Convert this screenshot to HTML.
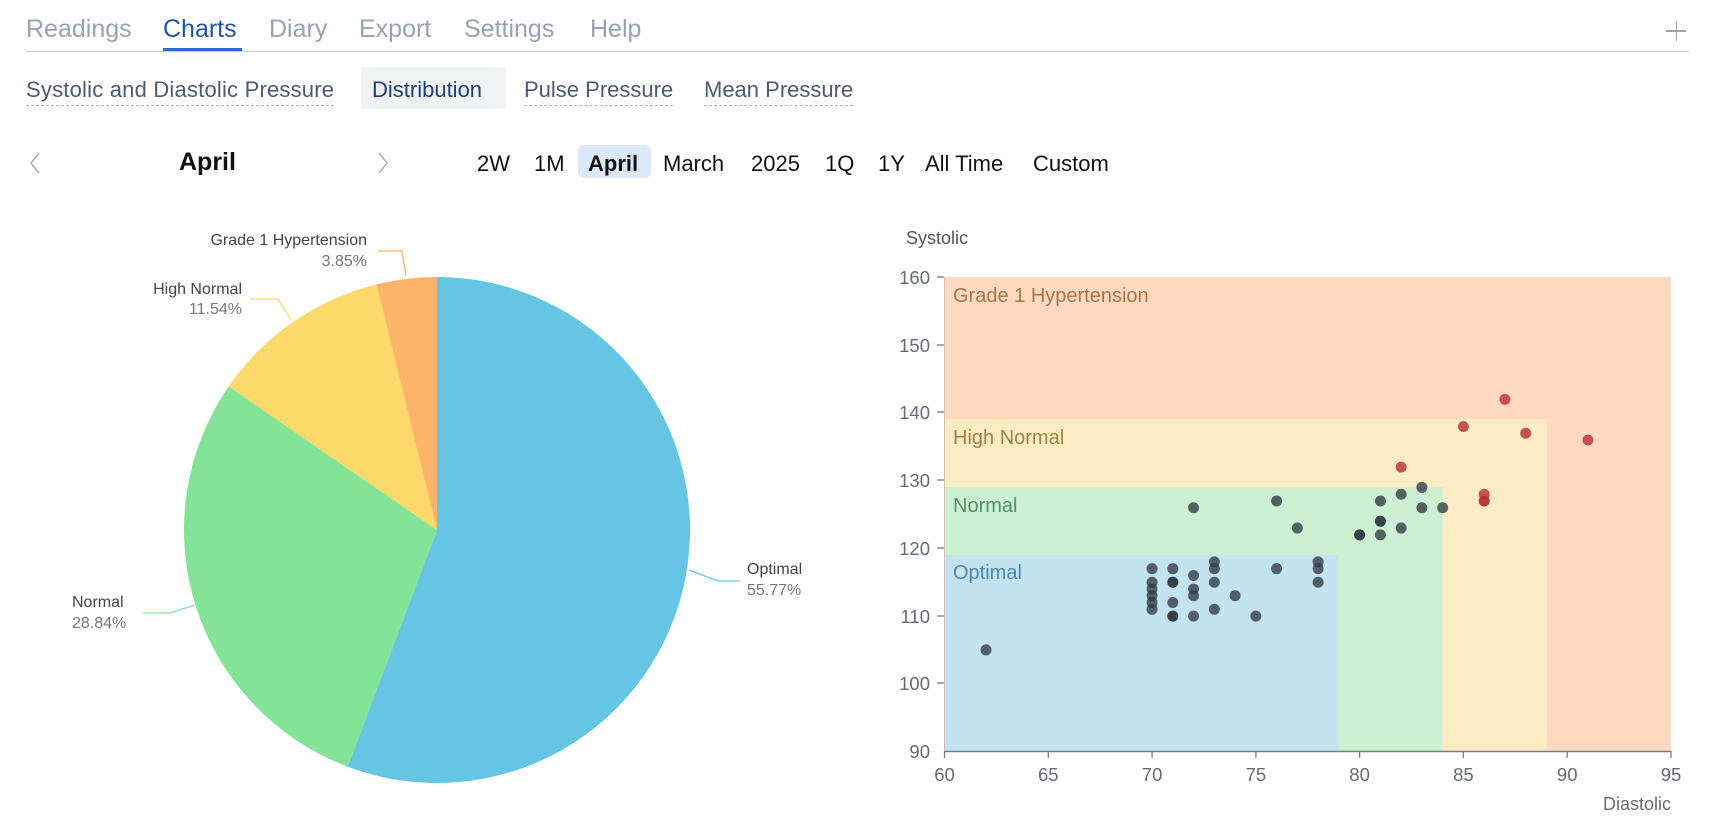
<!DOCTYPE html>
<html><head><meta charset="utf-8"><style>
body{margin:0;width:1720px;height:828px;background:#fff;font-family:"Liberation Sans",sans-serif;position:relative;overflow:hidden}
.a{position:absolute;white-space:nowrap}
.nav{top:15px;font-size:25px;color:#97a2b3}
.sub{top:77px;font-size:22px;color:#4d5a6e;border-bottom:1.5px dashed #a8b0bd;padding-bottom:2px}
.btn{top:151px;font-size:22px;color:#111}
</style></head><body>
<div class="a nav" style="left:26px">Readings</div>
<div class="a nav" style="left:163px;color:#1f55a8">Charts</div>
<div class="a nav" style="left:269px">Diary</div>
<div class="a nav" style="left:359px">Export</div>
<div class="a nav" style="left:464px">Settings</div>
<div class="a nav" style="left:590px">Help</div>
<div class="a" style="left:26px;top:51px;width:1663px;height:1px;background:#c6ccd5"></div>
<div class="a" style="left:163px;top:48px;width:79px;height:3px;background:#2e6bd0"></div>
<div class="a" style="left:1666px;top:30px;width:20px;height:1.5px;background:#98a2b0"></div>
<div class="a" style="left:1675.5px;top:21px;width:1.5px;height:20px;background:#98a2b0"></div>

<div class="a" style="left:361px;top:67px;width:145px;height:42px;background:#f1f2f4"></div>
<div class="a sub" style="left:26px;letter-spacing:0.2px">Systolic and Diastolic Pressure</div>
<div class="a" style="left:372px;top:77px;font-size:22px;color:#1f3f7a">Distribution</div>
<div class="a sub" style="left:524px">Pulse Pressure</div>
<div class="a sub" style="left:704px">Mean Pressure</div>

<svg class="a" style="left:28px;top:151px" width="14" height="24"><path d="M11 2 L3 12 L11 22" fill="none" stroke="#9aa2ad" stroke-width="1.3"/></svg>
<svg class="a" style="left:376px;top:151px" width="14" height="24"><path d="M3 2 L11 12 L3 22" fill="none" stroke="#9aa2ad" stroke-width="1.3"/></svg>
<div class="a" style="left:179px;top:148px;font-size:25px;font-weight:bold;color:#111">April</div>
<div class="a" style="left:578px;top:145px;width:73px;height:33px;background:#dce9fb;border-radius:6px"></div>
<div class="a btn" style="left:477px">2W</div>
<div class="a btn" style="left:534px">1M</div>
<div class="a btn" style="left:588px;font-weight:bold">April</div>
<div class="a btn" style="left:663px">March</div>
<div class="a btn" style="left:751px">2025</div>
<div class="a btn" style="left:825px">1Q</div>
<div class="a btn" style="left:878px">1Y</div>
<div class="a btn" style="left:925px">All Time</div>
<div class="a btn" style="left:1033px">Custom</div>

<svg class="a" style="left:0;top:0" width="1720" height="828" font-family="Liberation Sans, sans-serif">
<path d="M437 530 L437 277 A253 253 0 1 1 347.7 766.7 Z" fill="#67c5e4"/>
<path d="M437 530 L347.7 766.7 A253 253 0 0 1 228.7 386.4 Z" fill="#83e396"/>
<path d="M437 530 L228.7 386.4 A253 253 0 0 1 376.4 284.4 Z" fill="#fdd86a"/>
<path d="M437 530 L376.4 284.4 A253 253 0 0 1 437 277 Z" fill="#feb36a"/>
<polyline points="689,570 718,581 740,581" fill="none" stroke="#67c5e4" stroke-width="1.3"/>
<polyline points="195,605 170,613 143,613" fill="none" stroke="#83e396" stroke-width="1.3"/>
<polyline points="291,320 278,299 250,299" fill="none" stroke="#fdd86a" stroke-width="1.3"/>
<polyline points="406,276 402,251 378,251" fill="none" stroke="#feb36a" stroke-width="1.3"/>
<g font-size="16" fill="#444">
<text x="747" y="574">Optimal</text><text x="747" y="595" fill="#777">55.77%</text>
<text x="72" y="607">Normal</text><text x="72" y="628" fill="#777">28.84%</text>
<text x="242" y="294" text-anchor="end">High Normal</text><text x="242" y="314" text-anchor="end" fill="#777">11.54%</text>
<text x="367" y="245" text-anchor="end">Grade 1 Hypertension</text><text x="367" y="266" text-anchor="end" fill="#777">3.85%</text>
</g>
<rect x="944.5" y="277" width="726.5" height="474" fill="#fed9c0"/>
<rect x="944.5" y="419" width="602" height="332" fill="#fdebc4"/>
<rect x="944.5" y="487" width="498" height="264" fill="#cdf0d3"/>
<rect x="944.5" y="555" width="394" height="196" fill="#c2e3ef"/>
<g font-size="20">
<text x="953" y="302" fill="#a9744a">Grade 1 Hypertension</text>
<text x="953" y="444" fill="#a08446">High Normal</text>
<text x="953" y="512" fill="#4f9463">Normal</text>
<text x="953" y="579" fill="#4f88a6">Optimal</text>
</g>
<line x1="944.5" y1="277" x2="944.5" y2="751" stroke="#d8c0b0" stroke-width="1"/>
<line x1="944.5" y1="751.5" x2="1671" y2="751.5" stroke="#777c86" stroke-width="1.5"/>
<g stroke="#777c86" stroke-width="1.3">
<line x1="937" y1="277" x2="944" y2="277"/><line x1="937" y1="345" x2="944" y2="345"/><line x1="937" y1="412" x2="944" y2="412"/><line x1="937" y1="480" x2="944" y2="480"/><line x1="937" y1="548" x2="944" y2="548"/><line x1="937" y1="616" x2="944" y2="616"/><line x1="937" y1="683" x2="944" y2="683"/>
<line x1="944.5" y1="751" x2="944.5" y2="758"/><line x1="1048.3" y1="751" x2="1048.3" y2="758"/><line x1="1152.1" y1="751" x2="1152.1" y2="758"/><line x1="1255.9" y1="751" x2="1255.9" y2="758"/><line x1="1359.6" y1="751" x2="1359.6" y2="758"/><line x1="1463.4" y1="751" x2="1463.4" y2="758"/><line x1="1567.2" y1="751" x2="1567.2" y2="758"/><line x1="1671" y1="751" x2="1671" y2="758"/>
</g>
<g font-size="18.5" fill="#666b75" text-anchor="end">
<text x="930" y="284">160</text><text x="930" y="352">150</text><text x="930" y="419">140</text><text x="930" y="487">130</text><text x="930" y="555">120</text><text x="930" y="623">110</text><text x="930" y="690">100</text><text x="930" y="758">90</text>
</g>
<g font-size="18.5" fill="#666b75" text-anchor="middle">
<text x="944.5" y="781">60</text><text x="1048.3" y="781">65</text><text x="1152.1" y="781">70</text><text x="1255.9" y="781">75</text><text x="1359.6" y="781">80</text><text x="1463.4" y="781">85</text><text x="1567.2" y="781">90</text><text x="1671" y="781">95</text>
</g>
<text x="906" y="244" font-size="18" fill="#555">Systolic</text>
<text x="1671" y="810" font-size="18" fill="#666b75" text-anchor="end">Diastolic</text>
<g id="pts"></g>
</svg>
<script>
var X=d=>944.5+(d-60)*20.757,Y=s=>751.5-(s-90)*6.771;
var dark=[[62,105],[70,117],[70,115],[70,114],[70,113],[70,112],[70,111],[71,117],[71,115],[71,115],[71,112],[71,110],[71,110],[72,116],[72,114],[72,113],[72,110],[72,126],[73,118],[73,117],[73,115],[73,111],[74,113],[75,110],[76,127],[76,117],[77,123],[78,118],[78,117],[78,115],[80,122],[80,122],[81,127],[81,124],[81,124],[81,122],[82,128],[82,123],[83,129],[83,126],[84,126]];
var red=[[82,132],[85,138],[86,128],[86,127],[86,127],[87,142],[88,137],[91,136]];
var g=document.getElementById('pts'),h='';
dark.forEach(p=>h+='<circle cx="'+X(p[0])+'" cy="'+Y(p[1])+'" r="5.5" fill="#2f3a42" fill-opacity="0.78"/>');
red.forEach(p=>h+='<circle cx="'+X(p[0])+'" cy="'+Y(p[1])+'" r="5.5" fill="#b8383a" fill-opacity="0.85"/>');
g.innerHTML=h;
</script>
</body></html>
